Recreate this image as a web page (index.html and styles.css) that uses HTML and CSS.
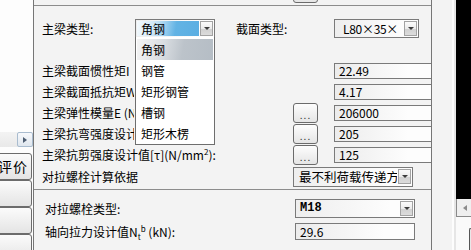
FILE: index.html
```html
<!DOCTYPE html>
<html lang="zh-CN">
<head>
  <meta charset="UTF-8" />
  <title>主梁参数</title>
  <link rel="stylesheet" href="styles.css">
</head>
<body>
  <div class="screen">
    <!-- left strip -->
    <div class="side">
      <div class="side-blank"></div>
      <div class="hscroll"><span class="hscroll-btn"><span class="tri-right"></span></span></div>
      <div class="side-btns">
        <div class="side-btn">评价</div>
        <div class="side-btn"></div>
        <div class="side-btn"></div>
        <div class="side-btn"></div>
      </div>
    </div>

    <!-- main panel -->
    <div class="panel">
      <div class="panel-top"><span class="dots-btn cut"></span></div>

      <div class="group group-beam">
        <div class="row row-type">
          <span class="label w-type">主梁类型:</span>
          <div class="combo combo-beam">
            <span class="combo-text sel">角钢</span>
            <span class="combo-arrow"></span>
            <ul class="droplist">
              <li class="on">角钢</li>
              <li>钢管</li>
              <li>矩形钢管</li>
              <li>槽钢</li>
              <li>矩形木楞</li>
            </ul>
          </div>
          <span class="label w-sect">截面类型:</span>
          <div class="combo combo-sect">
            <span class="combo-text">L80×35×</span>
            <span class="combo-arrow"></span>
          </div>
        </div>

        <!-- these labels run under the open drop list, only the left part shows -->
        <div class="row row-first">
          <span class="label w-main"><span class="cap">主梁截面惯性矩I</span></span>
          <span class="slot"></span>
          <span class="field">22.49</span>
        </div>
        <div class="row">
          <span class="label w-main"><span class="cap">主梁截面抵抗矩W</span></span>
          <span class="slot"></span>
          <span class="field">4.17</span>
        </div>
        <div class="row">
          <span class="label w-main"><span class="cap">主梁弹性模量E (N/</span></span>
          <span class="slot"><span class="dots-btn">...</span></span>
          <span class="field">206000</span>
        </div>
        <div class="row">
          <span class="label w-main"><span class="cap">主梁抗弯强度设计</span></span>
          <span class="slot"><span class="dots-btn">...</span></span>
          <span class="field">205</span>
        </div>
        <div class="row">
          <span class="label w-main">主梁抗剪强度设计值[τ](N/mm<sup>2</sup>):</span>
          <span class="slot"><span class="dots-btn">...</span></span>
          <span class="field">125</span>
        </div>
        <div class="row row-basis">
          <span class="label w-main">对拉螺栓计算依据</span>
          <div class="combo combo-wide">
            <span class="combo-text">最不利荷载传递方</span>
            <span class="combo-arrow"></span>
          </div>
        </div>
      </div>

      <div class="group group-bolt">
        <div class="row row-bolt">
          <span class="label w-bolt">对拉螺栓类型:</span>
          <div class="combo combo-wide">
            <span class="combo-text mono">M18</span>
            <span class="combo-arrow"></span>
          </div>
        </div>
        <div class="row row-force">
          <span class="label w-bolt">轴向拉力设计值N<sub>t</sub><sup>b</sup> (kN):</span>
          <span class="field field-wide">29.6</span>
        </div>
      </div>
    </div>

    <!-- right strip -->
    <div class="rside">
      <div class="rgap"></div>
      <div class="rline"></div>
      <div class="rgap2"></div>
      <div class="rwin">
        <div class="rblack"></div>
        <div class="rbar"><span class="tri-left"></span></div>
        <div class="rbelow"><span class="redge"></span></div>
      </div>
    </div>
  </div>
</body>
</html>
```

FILE: styles.css
```css
* {
  box-sizing: border-box;
}

body {
  margin: 0;
  font-family: "Noto Sans CJK SC", "Noto Sans", sans-serif;
  font-size: 12px;
  color: #000;
  background: #fff;
}

sup, sub {
  font-size: 8px;
  line-height: 0;
}

.screen {
  display: flex;
  width: 471px;
  height: 250px;
  overflow: hidden;
}

/* left strip */
.side {
  width: 33px;
  flex: none;
  display: flex;
  flex-direction: column;
  background: #fdfdfd;
  overflow: hidden;
}

.side-blank {
  height: 132px;
  flex: none;
}

.hscroll {
  height: 15px;
  flex: none;
  display: flex;
  justify-content: flex-end;
  background: linear-gradient(#f3f3f3, #e9e9e9);
}

.hscroll-btn {
  width: 16px;
  height: 15px;
  border: 1px solid #a9bccf;
  border-radius: 2px;
  background: linear-gradient(#f7f9fc, #dfe6ee);
  display: flex;
  align-items: center;
  justify-content: center;
}

.tri-right {
  border-left: 4px solid #4d5d72;
  border-top: 3px solid transparent;
  border-bottom: 3px solid transparent;
}

.side-btns {
  margin-top: 6px;
  display: flex;
  flex-direction: column;
}

.side-btn {
  width: 54px;
  height: 27px;
  margin-left: -22px;
  border: 1px solid #6c6c6c;
  border-radius: 3px;
  background: linear-gradient(#fbfbfb, #e4e4e4);
  text-align: right;
  padding-right: 3px;
  line-height: 24px;
  font-size: 14px;
  letter-spacing: 1px;
  white-space: nowrap;
}

/* main panel */
.panel {
  width: 399px;
  flex: none;
  display: flex;
  flex-direction: column;
  border-left: 1px solid #767676;
  border-right: 1px solid #767676;
  background: #f3f3f3;
  overflow: hidden;
}

.panel-top {
  height: 6px;
  flex: none;
  display: flex;
  border-bottom: 1px solid #8c8c8c;
}

.group {
  flex: none;
}

.group-beam {
  padding: 13px 0 1px 8px;
  border-bottom: 1px solid #8c8c8c;
}

.group-bolt {
  padding: 9px 0 0 11px;
}

.row {
  display: flex;
  align-items: center;
  height: 21px;
}

.row-type {
  height: 19px;
}

.row-first {
  margin-top: 22px;
}

.row-basis {
  height: 23px;
}

.row-bolt {
  height: 19px;
}

.row-force {
  height: 17px;
  margin-top: 5px;
}

.label {
  flex: none;
  white-space: nowrap;
}

.w-type {
  width: 93px;
}

.w-sect {
  width: 98px;
  margin-left: 21px;
}

.w-main {
  width: 251px;
}

.w-bolt {
  width: 250px;
}

.cap {
  display: inline-block;
  max-width: 92px;
  overflow: hidden;
  vertical-align: top;
}

.slot {
  width: 25px;
  margin-right: 16px;
  flex: none;
  display: flex;
}

.dots-btn {
  width: 25px;
  height: 20px;
  border: 1px solid #6b6b6b;
  border-radius: 3px;
  background: linear-gradient(#fdfdfd, #e5e5e5);
  font-size: 10px;
  line-height: 21px;
  text-align: center;
  letter-spacing: 1px;
  color: #333;
}

.dots-btn.cut {
  height: 21px;
  margin: -18px 0 0 259px;
}

.field {
  flex: none;
  width: 100px;
  height: 16px;
  border: 1px solid #7a7a7a;
  background: linear-gradient(to right, #ececec, #fdfdfd 75%);
  padding-left: 4px;
  line-height: 14px;
}

.field-wide {
  width: 120px;
  height: 17px;
  line-height: 15px;
}

/* combo boxes */
.combo {
  flex: none;
  position: relative;
  display: flex;
  align-items: center;
  height: 19px;
  border: 1px solid #7a7a7a;
  padding: 1px;
  background: linear-gradient(to right, #eeeeee, #fdfdfd 80%);
}

.combo-beam {
  width: 80px;
}

.combo-sect {
  width: 85px;
}

.combo-wide {
  width: 120px;
}

.row-basis .combo-wide {
  height: 20px;
}

.combo-text {
  flex: 1;
  align-self: stretch;
  padding-left: 4px;
  white-space: nowrap;
  overflow: hidden;
  line-height: 15px;
}

.row-basis .combo-text {
  font-size: 12.5px;
  line-height: 16px;
}

.combo-sect .combo-text {
  padding-left: 7px;
  letter-spacing: -0.3px;
}

.combo-text.sel {
  background: linear-gradient(100deg, #f5fafd 0%, #d4e9f7 25%, #9dd0ef 45%, #62b3e4 62%, #5aaee2 100%);
}

.combo-text.mono {
  font-family: "Liberation Mono", monospace;
  font-weight: bold;
  padding-left: 3px;
}

.combo-arrow {
  flex: none;
  width: 13px;
  height: 15px;
  margin-left: 1px;
  border: 1px solid #a3a3a3;
  background: linear-gradient(#fbfbfb 0%, #ececec 50%, #d0d0d0 51%, #dcdcdc 100%);
  display: flex;
  justify-content: center;
  padding-top: 5px;
}

.combo-arrow::before {
  content: "";
  width: 0;
  height: 0;
  border-top: 3px solid #3c3c3c;
  border-left: 3px solid transparent;
  border-right: 3px solid transparent;
}

.droplist {
  position: absolute;
  left: -1px;
  top: 100%;
  width: 80px;
  margin: 0;
  padding: 2px 1px 0 1px;
  list-style: none;
  background: #fff;
  border: 1px solid #6e6e6e;
  border-top: none;
  z-index: 5;
}

.droplist li {
  height: 21px;
  line-height: 21px;
  padding-left: 4px;
  white-space: nowrap;
}

.droplist li.on {
  background: linear-gradient(100deg, #f4f4f4 0%, #d9dde1 35%, #bcc3ca 60%, #b5bdc5 100%);
}

/* right strip */
.rside {
  flex: 1;
  display: flex;
  background: #f3f3f3;
}

.rgap {
  width: 20px;
  flex: none;
}

.rline {
  width: 2px;
  flex: none;
  background: #fdfdfd;
}

.rgap2 {
  width: 2px;
  flex: none;
  background: #e6e6e6;
}

.rwin {
  flex: 1;
  display: flex;
  flex-direction: column;
}

.rblack {
  height: 199px;
  flex: none;
  background: #000;
}

.rbar {
  height: 18px;
  flex: none;
  display: flex;
  align-items: center;
  padding-left: 6px;
  border-left: 1px solid #8a8a8a;
  border-bottom: 1px solid #8a8a8a;
  background: #efefef;
}

.tri-left {
  border-right: 4px solid #8a8a8a;
  border-top: 3px solid transparent;
  border-bottom: 3px solid transparent;
}

.rbelow {
  flex: 1;
  display: flex;
  padding: 11px 0 0 13px;
  background: #fafafa;
}

.redge {
  flex: 1;
  border-left: 1px solid #555;
  border-top: 1px solid #555;
  border-top-left-radius: 3px;
  background: #e8e8e8;
}
```
